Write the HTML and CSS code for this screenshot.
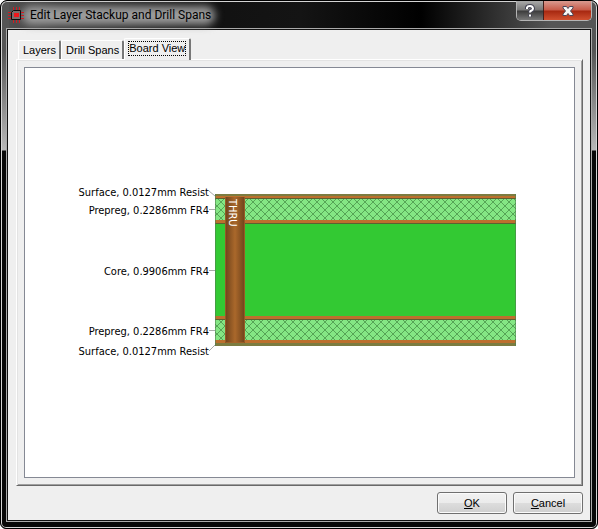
FILE: index.html
```html
<!DOCTYPE html>
<html lang="en">
<head>
<meta charset="utf-8">
<title>Edit Layer Stackup and Drill Spans</title>
<link rel="stylesheet" href="styles.css">
</head>
<body>
<main class="window">
  <header class="titlebar">
    <div class="heading">
      <svg class="app-icon" width="16" height="16" viewBox="0 0 16 16" aria-hidden="true">
        <path d="M5.500 0v3M8.500 0v3M11.500 0v3M5.500 13v3M8.500 13v3M11.500 13v3M0 5.500h3M0 8.500h3M0 11.500h3M13 5.500h3M13 8.500h3M13 11.500h3" stroke="#d01c22" fill="none"/>
        <path d="M5.500 3.500h7v9h-9v-7z" fill="#7b6b6b" stroke="#0c0c0c"/>
        <rect x="6" y="6" width="5" height="4" fill="#f0161c"/>
      </svg>
      <h1 class="title">Edit Layer Stackup and Drill Spans</h1>
    </div>
    <div class="caption-buttons">
      <button class="caption help" type="button" aria-label="Help">
        <svg width="12" height="14" viewBox="0 0 12 14" aria-hidden="true">
          <path d="M3 5V3.500Q3.500 2 6 2T9 4.500Q9 6 7.500 6.500T6 8.500M6 10.500v2" fill="none" stroke="#454555" stroke-width="4"/>
          <path d="M3 5V3.500Q3.500 2 6 2T9 4.500Q9 6 7.500 6.500T6 8.500M6 10.500v2" fill="none" stroke="#fff" stroke-width="2"/>
        </svg>
      </button>
      <button class="caption close" type="button" aria-label="Close">
        <svg width="12" height="10" viewBox="0 0 12 10" aria-hidden="true">
          <path d="M1 .5h3.500L6 2.500 7.500.5H11v1.500L8.500 5 11 8v1.500H7.500L6 7.500 4.500 9.500H1V8l2.500-3L1 2z" fill="#f6f6f6" stroke="#4b4658"/>
        </svg>
      </button>
    </div>
  </header>
  <div class="client">
    <div class="tabs" role="tablist">
      <button class="tab" type="button" role="tab">Layers</button>
      <button class="tab" type="button" role="tab">Drill Spans</button>
      <button class="tab selected" type="button" role="tab" aria-selected="true"><span class="focus">Board View</span></button>
    </div>
    <section class="panel" role="tabpanel">
      <div class="canvas">
        <svg class="board" width="436" height="176" viewBox="0 0 436 176" role="img" aria-label="Board layers">
          <defs>
            <pattern id="weave" x="3" y="1" width="8" height="8" patternUnits="userSpaceOnUse">
              <rect width="8" height="8" fill="#84e684"/>
              <path d="M-1-1l10 10M-1 9L9-1" stroke="#56a556" fill="none"/>
            </pattern>
            <linearGradient id="barrel">
              <stop offset="0" stop-color="#6d421b"/>
              <stop offset=".5" stop-color="#aa682b"/>
              <stop offset="1" stop-color="#6d421b"/>
            </linearGradient>
          </defs>
          <g class="leaders">
            <path d="M127 6l6 5M127 24.500h6M127 85.500h6M127 145.500h6M127 166l6-6"/>
          </g>
          <g class="labels">
            <text x="127" y="11">Surface, 0.0127mm Resist</text>
            <text x="127" y="29">Prepreg, 0.2286mm FR4</text>
            <text x="127" y="90">Core, 0.9906mm FR4</text>
            <text x="127" y="150">Prepreg, 0.2286mm FR4</text>
            <text x="127" y="170">Surface, 0.0127mm Resist</text>
          </g>
          <rect x="133" y="10" width="301" height="151" fill="#33c933"/>
          <rect x="133" y="14" width="301" height="21" fill="url(#weave)"/>
          <rect x="133" y="135" width="301" height="21" fill="url(#weave)"/>
          <g shape-rendering="crispEdges">
            <path d="M133 9h301v2H133z" fill="#7c7c40"/>
            <path d="M133 11h301v2H133zM133 35h301v3H133zM133 131h301v3H133zM133 155h301v3H133z" fill="#bc702e"/>
            <path d="M133 13h301v1H133zM133 38h301v1H133zM133 134h301v1H133z" fill="#5c6130"/>
            <path d="M133 158h301v3H133z" fill="#7c7c40"/>
            <path d="M133 9h1v152h-1zM433 9h1v152h-1z" fill="#508050" opacity=".6"/>
          </g>
          <rect x="143" y="12" width="20" height="146" fill="url(#barrel)"/>
          <path d="M143.500 12v145.500h19V12" fill="none" stroke="#a8642a" opacity=".7"/>
          <text class="drill" transform="translate(147 14) rotate(90)">THRU</text>
        </svg>
      </div>
    </section>
    <footer class="actions">
      <button class="push" type="button"><u>O</u>K</button>
      <button class="push" type="button"><u>C</u>ancel</button>
    </footer>
  </div>
</main>
</body>
</html>
```
FILE: styles.css
```css
* { box-sizing: border-box; }

body {
  margin: 0;
  background: #fff;
  color: #000;
  font: 11px "Liberation Sans", sans-serif;
}

button {
  margin: 0;
  padding: 0;
  color: inherit;
  font: inherit;
}

.window {
  display: flex;
  flex-direction: column;
  height: 100vh;
  padding: 0 5px 6px;
  border: 1px solid #000;
  border-radius: 7px 7px 6px 6px;
  box-shadow: inset 0 0 0 1px #d4d4d4;
  background:
    linear-gradient(#555 0, #555 50px, #b8b8b8 149px, transparent 150px) left / 8px 100% no-repeat,
    linear-gradient(#555 0, #555 50px, #b8b8b8 149px, transparent 150px) right / 8px 100% no-repeat,
    linear-gradient(90deg, #555 0, #333 60px, #111 190px, #141414 300px, #000 420px, #202020 470px, #555 550px, #555) top / 100% 30px no-repeat,
    #080808;
}

.titlebar {
  display: flex;
  justify-content: space-between;
  height: 27px;
  padding-left: 2px;
}

.heading {
  position: relative;
  display: flex;
  gap: 6px;
  padding-top: 6px;
}

/* soft glow behind the caption text */
.heading::before {
  content: "";
  position: absolute;
  inset: 5px -4px 3px 14px;
  border-radius: 9px;
  background: #9c9c9c;
  filter: blur(4px);
}

.app-icon,
.title { position: relative; }

.title {
  margin: 0;
  font: 12px/17px Roboto, sans-serif;
  white-space: nowrap;
}

.caption-buttons {
  display: flex;
  height: 20px;
  border: 1px solid #b4b4b4;
  border-top: 0;
  border-radius: 0 0 5px 5px;
  overflow: hidden;
}

.caption {
  display: grid;
  place-items: center;
  border: 0;
}

.help {
  width: 27px;
  border-right: 1px solid #42201c;
  background: linear-gradient(#aaa, #777 9px, #3c3c3c 10px, #777);
}

.close {
  width: 47px;
  background: linear-gradient(#d99a90, #c85b49 9px, #a72810 10px, #d05030);
}

.client {
  flex: 1;
  display: flex;
  flex-direction: column;
  padding: 7px 8px 7px 9px;
  border: 1px solid #aaa;
  outline: 1px solid #111;
  outline-offset: -2px;
  background: #efefef;
}

.tabs {
  display: flex;
  align-items: flex-end;
  height: 23px;
  padding-left: 2px;
}

.tab {
  height: 19px;
  padding: 0 3px 0 4px;
  border: solid #fff;
  border-width: 1px 2px 0 1px;
  border-right-color: #777;
  border-radius: 2px 2px 0 0;
  background: #efefef;
}

.selected {
  position: relative;
  height: 22px;
  margin-bottom: -1px;
  padding: 0 3px 3px 3px;
}

.focus {
  display: block;
  border: 1px dotted #000;
  line-height: 13px;
}

.panel {
  flex: 1;
  display: flex;
  padding: 7px;
  border: 1px solid;
  border-color: #fff #696969 #696969 #fff;
  box-shadow: inset 1px 1px #e3e3e3, inset -1px -1px #a0a0a0;
}

.canvas {
  flex: 1;
  display: grid;
  place-items: center;
  border: 1px solid #858994;
  background: #fff;
}

.board { overflow: visible; }
.labels { font: 11px "DejaVu Sans Condensed", "DejaVu Sans", sans-serif; text-anchor: end; }
.leaders { fill: none; stroke: #aaa; }
.drill { fill: #fff; font: 11px "DejaVu Sans Condensed", "DejaVu Sans", sans-serif; }

.actions {
  display: flex;
  justify-content: flex-end;
  gap: 6px;
  padding-top: 6px;
}

.push {
  width: 70px;
  height: 22px;
  border: 1px solid #707070;
  border-radius: 3px;
  background: linear-gradient(#f2f2f2, #ebebeb 50%, #dddddd 50%, #cfcfcf);
  box-shadow: inset 0 0 0 1px #fbfbfb;
}
```
